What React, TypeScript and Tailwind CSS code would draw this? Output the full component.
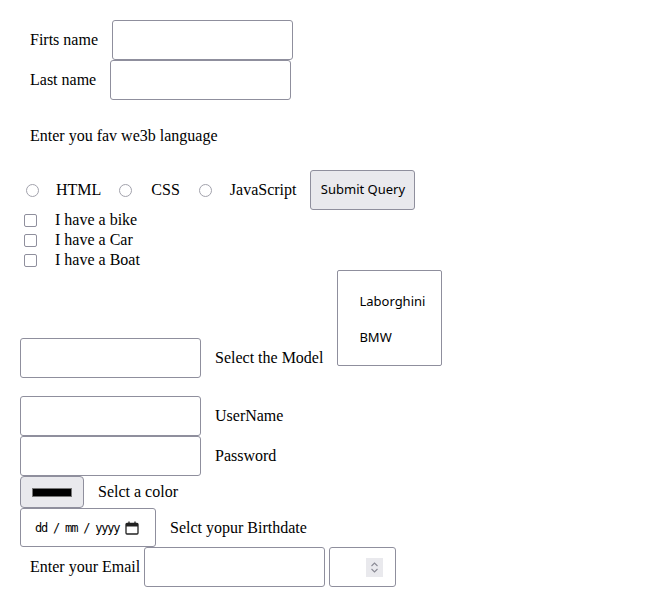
import React from "react";

const serif = { fontFamily: '"Liberation Serif", "Times New Roman", serif' };

function TextBox({ className = "" }: { className?: string }) {
    return <div className={"h-[40px] border border-[#8f8f9d] rounded-[3px] bg-white " + className} />
}

function Radio({ className = "" }: { className?: string }) {
    return <span className={"inline-block w-[13px] h-[13px] rounded-full border border-[#a2a2ac] bg-white " + className} />
}

function Check() {
    return <span className="inline-block ml-[24px] w-[13px] h-[13px] rounded-[2px] border border-[#8f8f9d] bg-white" />
}

export default function App() {
    return <div className="w-[645px] h-[607px] bg-white text-black text-[16px]" style={serif}>
        <div className="pt-[20px]">
            <div className="flex items-center h-[40px] pl-[30px]">
                <span>Firts name</span>
                <TextBox className="ml-[14px] w-[181px]" />
            </div>
            <div className="flex items-center h-[40px] pl-[30px]">
                <span>Last name</span>
                <TextBox className="ml-[14px] w-[181px]" />
            </div>
            <div className="mt-[27px] h-[18px] leading-[18px] pl-[30px]">Enter you fav we3b language</div>

            <div className="mt-[25px] flex items-center h-[40px]">
                <Radio className="ml-[26px]" />
                <span className="ml-[17px]">HTML</span>
                <Radio className="ml-[18px]" />
                <span className="ml-[19px]">CSS</span>
                <Radio className="ml-[19px]" />
                <span className="ml-[18px]">JavaScript</span>
                <button className="ml-[14px] h-[40px] w-[105px] bg-[#e9e9ed] border border-[#8f8f9d] rounded-[3px] text-[13px]"
                    style={{ fontFamily: '"Noto Sans", "DejaVu Sans", sans-serif' }}>Submit Query</button>
            </div>

            <div>
                {["I have a bike", "I have a Car", "I have a Boat"].map((t, key) =>
                    <div className="flex items-center h-[20px]" key={key}>
                        <Check />
                        <span className="ml-[18px]">{t}</span>
                    </div>
                )}
            </div>

            <div className="flex items-start h-[108px]">
                <TextBox className="mt-[68px] ml-[20px] w-[181px]" />
                <span className="mt-[79px] ml-[14px] leading-[18px]">Select the Model</span>
                <div className="ml-[14px] w-[105px] h-[96px] border border-[#8f8f9d] rounded-[2px] text-[13px] pl-[21px] pt-[21px]"
                    style={{ fontFamily: '"Noto Sans", "DejaVu Sans", sans-serif' }}>
                    <div className="h-[18px] leading-[18px]">Laborghini</div>
                    <div className="mt-[18px] h-[18px] leading-[18px]">BMW</div>
                </div>
            </div>

            <div className="mt-[18px] flex items-center h-[40px]">
                <TextBox className="ml-[20px] w-[181px]" />
                <span className="ml-[14px]">UserName</span>
            </div>
            <div className="flex items-center h-[40px]">
                <TextBox className="ml-[20px] w-[181px]" />
                <span className="ml-[14px]">Password</span>
            </div>

            <div className="flex items-center h-[32px]">
                <div className="ml-[20px] w-[64px] h-[32px] bg-[#e9e9ed] border border-[#8f8f9d] rounded-[4px] flex items-center justify-center">
                    <div className="w-[40px] h-[9px] bg-black border border-[#777]" />
                </div>
                <span className="ml-[14px]">Selct a color</span>
            </div>

            <div className="flex items-center h-[39px]">
                <div className="ml-[20px] w-[136px] h-[39px] border border-[#8f8f9d] rounded-[3px] flex items-center pl-[14px] text-[12px] whitespace-nowrap"
                    style={{ fontFamily: '"DejaVu Sans Mono", "Liberation Mono", monospace' }}>
                    <span className="tracking-[-1.2px]">dd / mm / yyyy</span>
                    <svg className="ml-[6px]" width="14" height="14" viewBox="0 0 14 14" fill="none">
                        <rect x="1" y="2.5" width="12" height="10.5" rx="1" stroke="#222" strokeWidth="1.3" />
                        <rect x="1" y="3" width="12" height="2.5" fill="#222" />
                        <line x1="4" y1="0.5" x2="4" y2="3" stroke="#222" strokeWidth="1.3" />
                        <line x1="10" y1="0.5" x2="10" y2="3" stroke="#222" strokeWidth="1.3" />
                    </svg>
                </div>
                <span className="ml-[14px]">Selct yopur Birthdate</span>
            </div>

            <div className="flex items-center h-[40px]">
                <span className="ml-[30px]">Enter your Email</span>
                <TextBox className="ml-[4px] w-[181px]" />
                <div className="ml-[4px] w-[67px] h-[40px] border border-[#8f8f9d] rounded-[3px] flex items-center justify-end pr-[12px]">
                    <div className="w-[17px] h-[19px] bg-[#e9e9ed] flex items-center justify-center">
                        <svg width="9" height="13" viewBox="0 0 9 13" fill="none" stroke="#8a8a95" strokeWidth="1.1">
                            <polyline points="1.5,5 4.5,2 7.5,5" />
                            <polyline points="1.5,8 4.5,11 7.5,8" />
                        </svg>
                    </div>
                </div>
            </div>
        </div>
    </div>
}
